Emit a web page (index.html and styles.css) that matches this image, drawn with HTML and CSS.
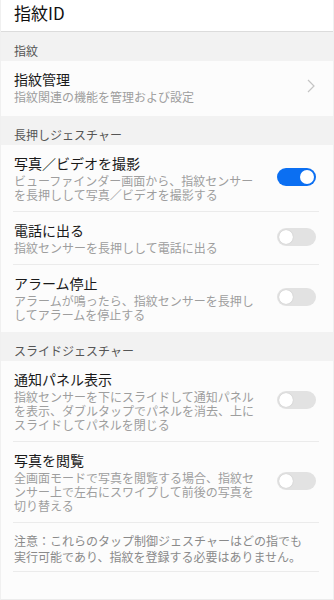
FILE: index.html
```html
<!DOCTYPE html>
<html lang="ja">
<head>
<meta charset="utf-8">
<title>指紋ID</title>
<link rel="stylesheet" href="styles.css">
</head>
<body>
<div class="screen">
  <header class="header">指紋ID</header>

  <div class="section">指紋</div>
  <div class="item item-nav">
    <div class="text">
      <div class="title">指紋管理</div>
      <div class="sub">指紋関連の機能を管理および設定</div>
    </div>
    <svg class="chev" width="8" height="14" viewBox="0 0 8 14"><path d="M1 1 L7 7 L1 13" fill="none" stroke="#c4c4c4" stroke-width="1.2"/></svg>
  </div>

  <div class="section">長押しジェスチャー</div>
  <div class="item">
    <div class="text">
      <div class="title">写真／ビデオを撮影</div>
      <div class="sub">ビューファインダー画面から、指紋センサーを長押しして写真／ビデオを撮影する</div>
    </div>
    <span class="toggle on"><span class="knob"></span></span>
  </div>
  <div class="item">
    <div class="text">
      <div class="title">電話に出る</div>
      <div class="sub">指紋センサーを長押しして電話に出る</div>
    </div>
    <span class="toggle"><span class="knob"></span></span>
  </div>
  <div class="item last">
    <div class="text">
      <div class="title">アラーム停止</div>
      <div class="sub">アラームが鳴ったら、指紋センサーを長押ししてアラームを停止する</div>
    </div>
    <span class="toggle"><span class="knob"></span></span>
  </div>

  <div class="section">スライドジェスチャー</div>
  <div class="item">
    <div class="text">
      <div class="title">通知パネル表示</div>
      <div class="sub">指紋センサーを下にスライドして通知パネルを表示、ダブルタップでパネルを消去、上にスライドしてパネルを閉じる</div>
    </div>
    <span class="toggle"><span class="knob"></span></span>
  </div>
  <div class="item">
    <div class="text">
      <div class="title">写真を閲覧</div>
      <div class="sub">全画面モードで写真を閲覧する場合、指紋センサー上で左右にスワイプして前後の写真を切り替える</div>
    </div>
    <span class="toggle"><span class="knob"></span></span>
  </div>
  <div class="note">注意：これらのタップ制御ジェスチャーはどの指でも実行可能であり、指紋を登録する必要はありません。</div>
</div>
</body>
</html>
```

FILE: styles.css
```css
html, body {
  margin: 0;
  padding: 0;
  background: #ffffff;
}
body {
  font-family: "Noto Sans CJK JP", "Noto Sans", sans-serif;
  color: #1a1a1a;
}
.screen {
  width: 334px;
  min-height: 600px;
  box-sizing: border-box;
  border-left: 1px solid #f0f0f0;
  border-right: 1px solid #f0f0f0;
  border-bottom: 1px solid #ececec;
  background: #fcfcfc;
}
.header {
  height: 31px;
  border-bottom: 1px solid #dcdcdc;
  padding-left: 13px;
  font-size: 17px;
  line-height: 26px;
  color: #111;
  background: #ffffff;
}
.section {
  background: #f2f2f2;
  padding: 10px 13px 2px;
  font-size: 12px;
  line-height: 17px;
  color: #555;
}
.item {
  display: flex;
  align-items: center;
  margin: 0 14px 0 12px;
  padding: 7px 3px 9px 1px;
  border-bottom: 1px solid #ebebeb;
}
.item.last {
  border-bottom: none;
  padding-bottom: 10px;
}
.item-nav {
  border-bottom: none;
  padding-bottom: 12px;
}
.text {
  flex: 1;
  min-width: 0;
}
.title {
  font-size: 14px;
  line-height: 22px;
  color: #1a1a1a;
}
.sub {
  font-size: 12px;
  line-height: 14px;
  color: #9e9e9e;
  max-width: 246px;
}
.chev {
  flex: none;
  margin-right: 1px;
}
.toggle {
  flex: none;
  position: relative;
  width: 39px;
  height: 18px;
  border-radius: 9px;
  background: #e2e2e2;
}
.toggle .knob {
  position: absolute;
  top: 2px;
  left: 2px;
  width: 14px;
  height: 14px;
  border-radius: 50%;
  background: #ffffff;
  box-shadow: 0 0 1px rgba(0,0,0,0.25);
}
.toggle.on {
  background: #0b6ff2;
}
.toggle.on .knob {
  left: auto;
  right: 2px;
  box-shadow: none;
}
.note {
  margin: 0 14px 0 12px;
  padding: 10px 14px 6px 1px;
  font-size: 12px;
  line-height: 16px;
  color: #8a8a8a;
  border-bottom: 1px solid #ebebeb;
}
```
